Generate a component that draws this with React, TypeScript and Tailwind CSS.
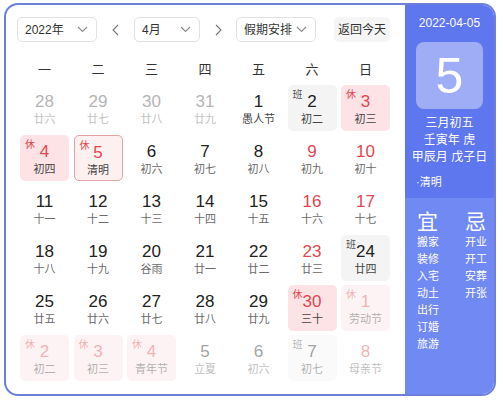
import React from "react";

type Cell = {
  d: number;
  l: string;
  tag?: "休" | "班";
  red?: boolean;
  other?: boolean;
  today?: boolean;
  fest?: boolean;
};

const rows: Cell[][] = [
  [
    { d: 28, l: "廿六", other: true, prev: true } as Cell,
    { d: 29, l: "廿七", other: true } as Cell,
    { d: 30, l: "廿八", other: true },
    { d: 31, l: "廿九", other: true },
    { d: 1, l: "愚人节", fest: true },
    { d: 2, l: "初二", tag: "班" },
    { d: 3, l: "初三", tag: "休" },
  ],
  [
    { d: 4, l: "初四", tag: "休" },
    { d: 5, l: "清明", tag: "休", today: true },
    { d: 6, l: "初六" },
    { d: 7, l: "初七" },
    { d: 8, l: "初八" },
    { d: 9, l: "初九", red: true },
    { d: 10, l: "初十", red: true },
  ],
  [
    { d: 11, l: "十一" },
    { d: 12, l: "十二" },
    { d: 13, l: "十三" },
    { d: 14, l: "十四" },
    { d: 15, l: "十五" },
    { d: 16, l: "十六", red: true },
    { d: 17, l: "十七", red: true },
  ],
  [
    { d: 18, l: "十八" },
    { d: 19, l: "十九" },
    { d: 20, l: "谷雨" },
    { d: 21, l: "廿一" },
    { d: 22, l: "廿二" },
    { d: 23, l: "廿三", red: true },
    { d: 24, l: "廿四", tag: "班" },
  ],
  [
    { d: 25, l: "廿五" },
    { d: 26, l: "廿六" },
    { d: 27, l: "廿七" },
    { d: 28, l: "廿八" },
    { d: 29, l: "廿九" },
    { d: 30, l: "三十", tag: "休" },
    { d: 1, l: "劳动节", tag: "休", other: true },
  ],
  [
    { d: 2, l: "初二", tag: "休", other: true },
    { d: 3, l: "初三", tag: "休", other: true },
    { d: 4, l: "青年节", tag: "休", other: true },
    { d: 5, l: "立夏", other: true },
    { d: 6, l: "初六", other: true },
    { d: 7, l: "初七", tag: "班", other: true },
    { d: 8, l: "母亲节", red: true, other: true },
  ],
];

const Chevron = () => (
  <svg width="11" height="7" viewBox="0 0 11 7" fill="none">
    <path d="M1 1l4.5 4.5L10 1" stroke="#8a8a8a" strokeWidth="1.1" />
  </svg>
);

function Select({ label, w }: { label: string; w: string }) {
  return (
    <div
      className={`${w} h-[25px] border border-[#e2e2e2] rounded-[5px] flex items-center justify-between pl-[7px] pr-[8px] text-[12px] text-[#333]`}
    >
      <span>{label}</span>
      <Chevron />
    </div>
  );
}

function DayCell({ c, row }: { c: Cell; row: number }) {
  const prevMonth = c.other && row === 0;
  let bg = "";
  if (c.today) bg = "bg-[#fdf0f0] border border-[#e5a2a6]";
  else if (c.tag === "休") bg = "bg-[#fde3e5]";
  else if (c.tag === "班") bg = "bg-[#f4f4f4]";
  const red = c.tag === "休" || c.red;
  const numColor = prevMonth ? "text-[#b5b5b5]" : red ? "text-[#e2474f]" : "text-[#222]";
  const lunarColor = prevMonth
    ? "text-[#c2c2c2]"
    : c.tag || c.fest || c.today
    ? "text-[#444]"
    : "text-[#6a6a6a]";
  const faded = c.other && row > 0 ? "opacity-[0.42]" : "";
  return (
    <div className={`relative h-[46px] rounded-[5px] ${bg} ${faded} flex flex-col items-center pt-[7px]`}>
      {c.tag && (
        <span
          className={`absolute left-[5px] top-[4px] text-[10px] leading-[12px] ${
            c.tag === "休" ? "text-[#e2474f]" : "text-[#555]"
          }`}
        >
          {c.tag}
        </span>
      )}
      <span className={`text-[17px] leading-[20px] ${numColor}`}>{c.d}</span>
      <span className={`text-[11px] leading-[15px] ${lunarColor}`}>{c.l}</span>
    </div>
  );
}

export default function App() {
  const weekdays = ["一", "二", "三", "四", "五", "六", "日"];
  const yi = ["搬家", "装修", "入宅", "动土", "出行", "订婚", "旅游"];
  const ji = ["开业", "开工", "安葬", "开张"];
  return (
    <div
      className="w-[503px] h-[400px] bg-white pl-[4px] pt-[3px]"
      style={{ fontFamily: '"Liberation Sans", "Noto Sans CJK SC", sans-serif' }}
    >
      <div className="w-[492px] h-[393px] border-2 border-[#6c80da] rounded-[14px] overflow-hidden flex">
        <div className="flex-1 pl-[11px] pt-[12px]">
          <div className="flex items-center">
            <Select label="2022年" w="w-[80px]" />
            <div className="w-[37px] flex justify-center">
              <svg width="7" height="12" viewBox="0 0 7 12" fill="none">
                <path d="M6 1L1 6l5 5" stroke="#777" strokeWidth="1.1" />
              </svg>
            </div>
            <Select label="4月" w="w-[66px]" />
            <div className="w-[36px] flex justify-center">
              <svg width="7" height="12" viewBox="0 0 7 12" fill="none">
                <path d="M1 1l5 5-5 5" stroke="#777" strokeWidth="1.1" />
              </svg>
            </div>
            <Select label="假期安排" w="w-[80px]" />
            <div className="ml-[18px] w-[56px] h-[25px] rounded-[5px] bg-[#f5f5f5] flex items-center justify-center text-[12px] text-[#333]">
              返回今天
            </div>
          </div>
          <div className="ml-[3px] mt-[16px] h-[24px] grid grid-cols-[repeat(7,49px)] gap-x-[4.5px] items-center">
            {weekdays.map((w) => (
              <div key={w} className="text-center text-[13px] text-[#333]">
                {w}
              </div>
            ))}
          </div>
          <div className="ml-[3px] mt-[3px] grid grid-cols-[repeat(7,49px)] gap-x-[4.5px] gap-y-[4px]">
            {rows.map((r, ri) => r.map((c, ci) => <DayCell key={`${ri}-${ci}`} c={c} row={ri} />))}
          </div>
        </div>
        <div className="w-[89px] flex flex-col text-white">
          <div className="h-[193px] bg-[#5e76ee] flex flex-col items-center pt-[10px]">
            <div className="text-[12px] leading-[16px]">2022-04-05</div>
            <div className="mt-[11px] w-[67px] h-[67px] rounded-[8px] bg-[#9eadf5] flex items-center justify-center text-[50px] leading-none">
              5
            </div>
            <div className="mt-[6px] text-[12px] leading-[17px] text-center">
              <div>三月初五</div>
              <div>壬寅年 虎</div>
              <div>甲辰月 戊子日</div>
            </div>
            <div className="self-start pl-[11px] mt-[9px] text-[11px] leading-[14px]">·清明</div>
          </div>
          <div className="flex-1 bg-[#7189f3] flex pl-[12px] pt-[12px]">
            <div className="w-[48px] flex flex-col">
              <div className="text-[21px] leading-[24px]">宜</div>
              {yi.map((t) => (
                <div key={t} className="text-[11px] leading-[17px]">
                  {t}
                </div>
              ))}
            </div>
            <div className="flex flex-col">
              <div className="text-[21px] leading-[24px]">忌</div>
              {ji.map((t) => (
                <div key={t} className="text-[11px] leading-[17px]">
                  {t}
                </div>
              ))}
            </div>
          </div>
        </div>
      </div>
    </div>
  );
}
